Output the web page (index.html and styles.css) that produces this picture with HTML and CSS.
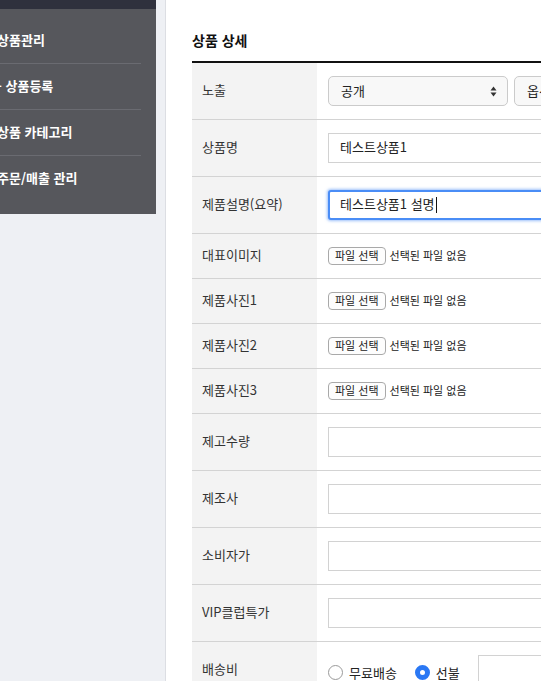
FILE: index.html
```html
<!DOCTYPE html>
<html lang="ko">
<head>
    <meta charset="UTF-8">
    <meta name="viewport" content="width=device-width, initial-scale=1.0">
    <title>상품 상세</title>
    <link rel="stylesheet" href="styles.css">
</head>
<body>
    <div class="layout">
        <aside class="side">
            <div class="side-panel">
                <div class="side-top"></div>
                <ul class="side-menu">
                    <li>상품관리</li>
                    <li>- 상품등록</li>
                    <li>상품 카테고리</li>
                    <li>주문/매출 관리</li>
                </ul>
            </div>
        </aside>

        <main class="content">
            <h2 class="section-title">상품 상세</h2>
            <table class="detail">
                <tr>
                    <th>노출</th>
                    <td>
                        <div class="select-row">
                            <div class="select-box">
                                <span>공개</span>
                                <svg class="select-arrow" width="7" height="11" viewBox="0 0 7 11">
                                    <path d="M3.5 0.5 L6.5 4.5 L0.5 4.5 Z M3.5 10.5 L6.5 6.5 L0.5 6.5 Z" fill="#333"/>
                                </svg>
                            </div>
                            <div class="select-box">
                                <span>옵션 선택</span>
                            </div>
                        </div>
                    </td>
                </tr>
                <tr>
                    <th>상품명</th>
                    <td><div class="field">테스트상품1</div></td>
                </tr>
                <tr>
                    <th>제품설명(요약)</th>
                    <td><div class="field is-focus">테스트상품1 설명<span class="caret"></span></div></td>
                </tr>
                <tr>
                    <th>대표이미지</th>
                    <td><div class="file-row"><span class="file-btn">파일 선택</span><span class="file-name">선택된 파일 없음</span></div></td>
                </tr>
                <tr>
                    <th>제품사진1</th>
                    <td><div class="file-row"><span class="file-btn">파일 선택</span><span class="file-name">선택된 파일 없음</span></div></td>
                </tr>
                <tr>
                    <th>제품사진2</th>
                    <td><div class="file-row"><span class="file-btn">파일 선택</span><span class="file-name">선택된 파일 없음</span></div></td>
                </tr>
                <tr>
                    <th>제품사진3</th>
                    <td><div class="file-row"><span class="file-btn">파일 선택</span><span class="file-name">선택된 파일 없음</span></div></td>
                </tr>
                <tr>
                    <th>제고수량</th>
                    <td><div class="field"></div></td>
                </tr>
                <tr>
                    <th>제조사</th>
                    <td><div class="field"></div></td>
                </tr>
                <tr>
                    <th>소비자가</th>
                    <td><div class="field"></div></td>
                </tr>
                <tr>
                    <th>VIP클럽특가</th>
                    <td><div class="field"></div></td>
                </tr>
                <tr>
                    <th>배송비</th>
                    <td>
                        <div class="radio-row">
                            <label class="radio"><span class="radio-dot"></span>무료배송</label>
                            <label class="radio"><span class="radio-dot checked"></span>선불</label>
                            <div class="field short"></div>
                        </div>
                    </td>
                </tr>
            </table>
        </main>
    </div>
</body>
</html>
```

FILE: styles.css
```css
* {
    margin: 0;
    padding: 0;
    box-sizing: border-box;
    font-family: 'Noto Sans CJK KR', 'Noto Sans', sans-serif;
}

body {
    background: #fff;
    color: #222;
    overflow: hidden;
}

.layout {
    display: flex;
    min-height: 100vh;
}

/* sidebar */
.side {
    width: 166px;
    flex-shrink: 0;
    background: #eef0f4;
    border-right: 1px solid #dcdee3;
}

.side-panel {
    width: 156px;
    background: #56575c;
}

.side-top {
    height: 9px;
    background: #2f313d;
}

.side-menu {
    list-style: none;
    padding: 9px 15px 12px 0;
}

.side-menu li {
    height: 46px;
    line-height: 43px;
    margin-left: -3px;
    border-bottom: 1px solid #6a6b71;
    color: #fff;
    font-size: 13px;
    font-weight: bold;
    white-space: nowrap;
}

.side-menu li:last-child {
    border-bottom: none;
}

/* content */
.content {
    flex: 1;
    padding: 31px 0 0 26px;
}

.section-title {
    font-size: 14px;
    font-weight: bold;
    line-height: 18px;
    color: #111;
    margin-bottom: 12px;
}

.detail {
    width: 760px;
    border-collapse: collapse;
    border-top: 2px solid #111;
}

.detail tr {
    border-bottom: 1px solid #d3d3d3;
}

.detail th {
    width: 125px;
    background: #f3f3f3;
    text-align: left;
    font-weight: normal;
    font-size: 13px;
    color: #333;
    padding: 0 10px 3px;
}

.detail td {
    padding: 13px 10px 13px 11px;
}

.select-row {
    display: flex;
    gap: 6px;
}

.select-box {
    width: 180px;
    height: 30px;
    flex-shrink: 0;
    display: flex;
    align-items: center;
    justify-content: space-between;
    padding: 0 10px 2px 12px;
    border: 1px solid #cbcbcb;
    border-radius: 5px;
    background: #f8f8f8;
    font-size: 13px;
    color: #222;
}

.select-arrow {
    margin-top: 2px;
}

.field {
    height: 30px;
    width: 100%;
    border: 1px solid #d2d2d2;
    padding: 0 11px;
    font-size: 13px;
    line-height: 26px;
    color: #222;
    background: #fff;
}

.field.is-focus {
    border: 2px solid #4a8df6;
    border-radius: 3px;
    padding: 0 10px;
    line-height: 24px;
    box-shadow: 0 0 3px 1px rgba(74, 141, 246, 0.55);
}

.caret {
    display: inline-block;
    width: 1px;
    height: 16px;
    background: #111;
    vertical-align: middle;
    margin-left: 1px;
}

.file-row {
    display: flex;
    align-items: center;
    height: 18px;
}

.file-btn {
    height: 18px;
    line-height: 15px;
    padding: 0 6px;
    border: 1px solid #a9a9a9;
    border-radius: 4px;
    background: #fdfdfd;
    font-size: 11px;
    color: #222;
}

.file-name {
    font-size: 11px;
    line-height: 15px;
    color: #222;
    margin-left: 4px;
    margin-bottom: 2px;
}

.radio-row {
    display: flex;
    align-items: center;
    height: 30px;
}

.radio {
    display: flex;
    align-items: center;
    gap: 6px;
    font-size: 13px;
    color: #222;
    margin-right: 18px;
    margin-top: 4px;
}

.radio-dot {
    width: 15px;
    height: 15px;
    border-radius: 50%;
    border: 1px solid #9a9a9a;
    background: #fff;
}

.radio-dot.checked {
    border: 5px solid #2a78f4;
    background: #fff;
}

.field.short {
    width: 300px;
}
```
